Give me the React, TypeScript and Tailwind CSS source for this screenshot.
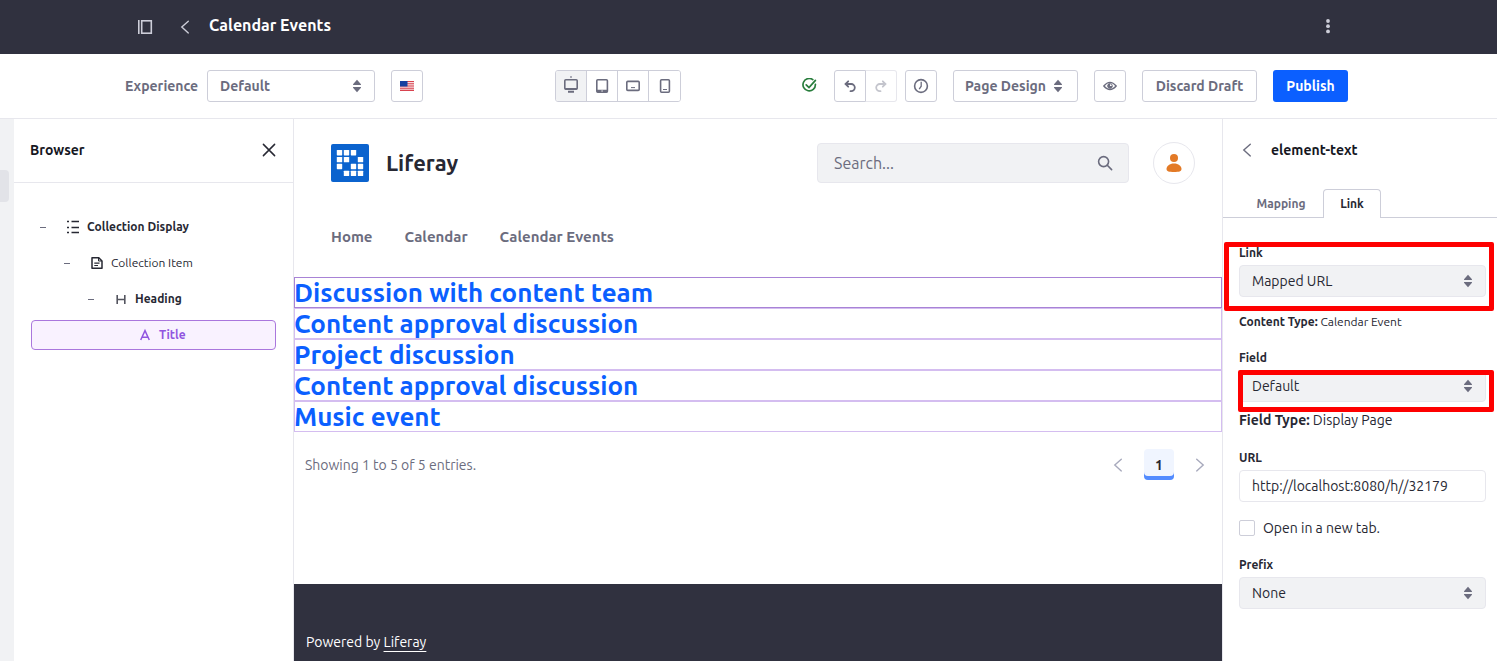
import { useState } from 'react'
import type { ReactNode } from 'react'
import clsx from 'clsx'

const events = [
  'Discussion with content team',
  'Content approval discussion',
  'Project discussion',
  'Content approval discussion',
  'Music event',
]

const CaretDouble = ({ className }: { className?: string }) => (
  <svg viewBox="0 0 16 16" className={clsx('w-4 h-4 fill-[#6b6c7e]', className)}>
    <path d="M8 1.8 12 6.3q.3.7-.5.7h-7q-.8 0-.5-.7z" />
    <path d="M8 14.2 12 9.7q.3-.7-.5-.7h-7q-.8 0-.5.7z" />
  </svg>
)

const Chevron = ({ right, className }: { right?: boolean; className?: string }) => (
  <svg viewBox="0 0 16 16" className={clsx('w-4 h-4', className)} fill="none" stroke="currentColor" strokeWidth="1.4" strokeLinecap="round">
    <path d={right ? 'M4.7 2.3 11.2 8l-6.5 5.9' : 'M11.3 2.3 4.8 8l6.5 5.9'} />
  </svg>
)

const Flag = () => (
  <svg viewBox="0 0 14 10" className="w-[14px] h-[10px]">
    <rect width="14" height="10" fill="#f7dcdf" />
    <path d="M0 .5h14M0 2.7h14M0 5h14M0 7.2h14M0 9.4h14" stroke="#d8434f" strokeWidth="1.1" />
    <rect width="7.5" height="5.5" fill="#1540a0" />
  </svg>
)

const Logo = () => {
  const rows = ['1110', '1101', '1011', '0111']
  return (
    <svg viewBox="0 0 38 38" className="w-[38px] h-[38px]">
      <rect width="38" height="38" rx="2" fill="#0b63ce" />
      {rows.map((row, y) =>
        row.split('').map((on, x) =>
          on === '1' ? (
            <rect key={`${x}-${y}`} x={5.8 + x * 7} y={6 + y * 6.9} width="5.4" height="5.4" rx=".6" fill="#fff" />
          ) : null
        )
      )}
    </svg>
  )
}

const devices: { name: string; icon: ReactNode }[] = [
  {
    name: 'Desktop',
    icon: (
      <>
        <path d="M8-1.8v1.6" strokeWidth="1.4" />
        <rect x="1.8" y="1.8" width="12.4" height="9.4" rx="1" />
        <path d="M2 10.8h12" />
        <path d="M5 13.7h6" strokeWidth="2" />
      </>
    ),
  },
  {
    name: 'Tablet',
    icon: (
      <>
        <rect x="2.8" y="1.8" width="10.6" height="12.4" rx="1" />
        <path d="M3 13h10.4" strokeWidth="2.6" />
        <path d="M7.4 13h1.4" stroke="#fff" strokeWidth="1" />
      </>
    ),
  },
  {
    name: 'Landscape phone',
    icon: (
      <>
        <rect x="1.8" y="3.4" width="12.4" height="9" rx="1" />
        <path d="M6 9.6h4" strokeWidth="1" />
      </>
    ),
  },
  {
    name: 'Portrait phone',
    icon: (
      <>
        <rect x="3.6" y="1.8" width="8.8" height="12.4" rx="1" />
        <path d="M6 11.5h4" strokeWidth="1" />
      </>
    ),
  },
]

const iconButton =
  'w-8 h-8 flex items-center justify-center bg-white border border-[#cdced9] rounded-[3px] text-[#6b6c7e] cursor-pointer'

const SelectBox = ({ id, options }: { id: string; options: string[] }) => (
  <div className="grid items-center">
    <select
      id={id}
      className="col-start-1 row-start-1 w-full h-8 px-3 appearance-none rounded bg-[#f1f2f4] border border-[#e7e7ed] text-sm text-[#272833]"
    >
      {options.map((option) => (
        <option key={option}>{option}</option>
      ))}
    </select>
    <CaretDouble className="col-start-1 row-start-1 justify-self-end mr-[10px] pointer-events-none" />
  </div>
)

const labelClass = 'block w-fit text-xs leading-[18px] font-semibold mb-[3px]'

const TopBar = () => (
  <header className="bg-[#30313f] text-[#cdced9]">
    <div className="max-w-[1247px] h-[54px] mx-auto pl-3 pr-9 flex items-center">
      <button aria-label="Toggle product menu" className="cursor-pointer">
        <svg viewBox="0 0 16 16" className="w-4 h-4" fill="none" stroke="currentColor" strokeWidth="1.6">
          <path d="M1.8 1v14" />
          <rect x="4.7" y="1.8" width="9.6" height="12.4" />
        </svg>
      </button>
      <a href="#back" aria-label="Back" className="ml-6">
        <Chevron />
      </a>
      <h1 className="ml-4 mb-1 text-base font-semibold text-white">Calendar Events</h1>
      <button aria-label="Options" className="ml-auto cursor-pointer">
        <svg viewBox="0 0 16 16" className="w-4 h-4" fill="currentColor">
          <circle cx="8" cy="2" r="1.9" />
          <circle cx="8" cy="7.2" r="1.9" />
          <circle cx="8" cy="12.4" r="1.9" />
        </svg>
      </button>
    </div>
  </header>
)

const Toolbar = () => {
  const [device, setDevice] = useState('Desktop')

  return (
    <div className="border-b border-[#e7e7ed]">
      <div className="max-w-[1247px] h-16 mx-auto pr-6 flex items-center text-sm font-semibold text-[#6b6c7e]">
        <label htmlFor="experience" className="w-[82px]">
          Experience
        </label>
        <div className="grid items-center w-[168px]">
          <select
            id="experience"
            className="col-start-1 row-start-1 w-full h-8 px-3 appearance-none rounded-[3px] border border-[#cdced9] font-semibold"
          >
            <option>Default</option>
          </select>
          <CaretDouble className="col-start-1 row-start-1 justify-self-end mr-[10px] pointer-events-none" />
        </div>
        <button aria-label="Language" className={clsx(iconButton, 'ml-4')}>
          <Flag />
        </button>

        <div className="ml-[132px] flex border border-[#cdced9] rounded-[3px] divide-x divide-[#cdced9] overflow-hidden">
          {devices.map(({ name, icon }) => (
            <button
              key={name}
              aria-label={name}
              onClick={() => setDevice(name)}
              className={clsx(
                'w-[31px] h-[30px] flex items-center justify-center cursor-pointer',
                device === name ? 'bg-[#f1f2f4]' : 'bg-white'
              )}
            >
              <svg viewBox="0 0 16 16" className="w-4 h-4 overflow-visible" fill="none" stroke="currentColor" strokeWidth="1.6">
                {icon}
              </svg>
            </button>
          ))}
        </div>

        <div className="ml-auto flex items-center gap-4">
          <svg viewBox="0 0 16 16" className="w-4 h-4 text-[#287d3c]" fill="none" stroke="currentColor" strokeWidth="1.7">
            <path d="M10.8 1.6A6.2 6.2 0 1 0 13.400 6.400" strokeLinecap="round" />
            <path d="m4.2 6.800 2.800 2.800 6.400-7.200" strokeLinecap="round" />
          </svg>
          <div className="flex">
            <button aria-label="Undo" className={clsx(iconButton, 'rounded-r-none')}>
              <svg viewBox="0 0 16 16" className="w-4 h-4" fill="none" stroke="currentColor" strokeWidth="1.8" strokeLinecap="round">
                <path d="M6.2 3.3 3.5 6l2.7 2.7M4 6h5.2a3.6 3.6 0 1 1 0 7.2h-.7" />
              </svg>
            </button>
            <button aria-label="Redo" disabled className="w-[31px] h-8 flex items-center justify-center border border-l-0 border-[#e7e7ed] rounded-r-[3px] text-[#c4c5cd]">
              <svg viewBox="0 0 16 16" className="w-4 h-4" fill="none" stroke="currentColor" strokeWidth="1.8" strokeLinecap="round">
                <path d="M9.8 3.3 12.5 6 9.8 8.7M12 6H6.8a3.6 3.6 0 1 0 0 7.2h.7" />
              </svg>
            </button>
            <button aria-label="History" className={clsx(iconButton, 'ml-2')}>
              <svg viewBox="0 0 16 16" className="w-4 h-4" fill="none" stroke="currentColor" strokeWidth="1.6">
                <circle cx="8" cy="8" r="6.4" />
                <path d="M8.2 3.8v4.4l-2 3" strokeWidth="1.3" />
              </svg>
            </button>
          </div>
          <button className="w-[125px] h-8 flex items-center justify-center gap-1 border border-[#cdced9] rounded-[3px] cursor-pointer">
            Page Design
            <CaretDouble />
          </button>
          <button aria-label="Preview" className={iconButton}>
            <svg viewBox="0 0 16 16" className="w-4 h-4" fill="none" stroke="currentColor" strokeWidth="1.3">
              <path d="M1.8 8q6.200-7.200 12.400 0-6.200 7.200-12.400 0z" />
              <path d="M8 5.600a2.400 2.400 0 1 0 2.400 2.400H8z" fill="currentColor" stroke="none" />
              <circle cx="8" cy="8" r="2.300" strokeWidth="1" />
            </svg>
          </button>
          <button className="w-[115px] h-8 border border-[#cdced9] rounded-[3px] cursor-pointer">Discard Draft</button>
          <button className="w-[75px] h-8 rounded-[3px] bg-[#0b5fff] text-white cursor-pointer">Publish</button>
        </div>
      </div>
    </div>
  )
}

const Dash = () => <span className="w-[6px] h-px bg-[#6b6c7e] mr-5" />

const BrowserPanel = () => (
  <aside className="w-[280px] shrink-0 border-r border-[#e7e7ed]">
    <div className="h-16 px-4 pb-[2px] flex items-center justify-between border-b border-[#e7e7ed]">
      <h2 className="text-sm font-semibold text-[#16171f]">Browser</h2>
      <button aria-label="Close" className="cursor-pointer">
        <svg viewBox="0 0 16 16" className="w-4 h-4" fill="none" stroke="#272833" strokeWidth="1.5" strokeLinecap="round">
          <path d="m2.4 2.4 11.2 11.2M13.6 2.4 2.4 13.6" />
        </svg>
      </button>
    </div>
    <ul className="mt-[29px] px-[17px] flex flex-col gap-[6px] text-xs font-semibold">
      <li className="h-[30px] pl-[9px] flex items-center">
        <Dash />
        <svg viewBox="0 0 14 14" className="w-[14px] h-[14px] mr-[7px]" fill="none" stroke="currentColor" strokeWidth="1.3">
          <path d="M1 1.5h2M5.5 1.5H13M1 7.5h2M5.5 7.5H13M1 12.5h2M5.5 12.5H13" />
        </svg>
        Collection Display
      </li>
      <li className="h-[30px] pl-[33px] flex items-center font-normal">
        <Dash />
        <svg viewBox="0 0 14 14" className="w-[14px] h-[14px] mr-[7px]" fill="none" stroke="currentColor" strokeWidth="1.5">
          <path d="M2 1.8h6.8L12 5v7.2H2z" strokeLinejoin="round" />
          <path d="M8.5 1.8V5H12" strokeWidth="1" />
          <path d="M4.3 7.2h5.2M4.3 9.5h3.7" strokeWidth="1.2" />
        </svg>
        Collection Item
      </li>
      <li className="h-[30px] pl-[57px] flex items-center">
        <Dash />
        <svg viewBox="0 0 14 14" className="w-[14px] h-[14px] mr-[7px]" fill="none" stroke="#54555f" strokeWidth="1.6">
          <path d="M3.2 3v9M10.8 3v9M3.2 7.5h7.6" />
        </svg>
        Heading
      </li>
      <li className="h-[30px] pl-[106px] flex items-center border border-[#aa77dd] rounded-sm bg-[#f9f2ff] text-[#9155e0]">
        <svg viewBox="0 0 14 14" className="w-[14px] h-[14px] mr-[7px]" fill="none" stroke="currentColor" strokeWidth="1.5">
          <path d="M2.7 12 7 2.6 11.3 12M4.3 9.2h5.4" />
        </svg>
        Title
      </li>
    </ul>
  </aside>
)

const PageCanvas = () => (
  <main className="flex-1 min-w-0 flex flex-col">
    <div className="pt-[23px] pl-[37px] pr-[27px] flex items-center">
      <Logo />
      <span className="ml-[17px] text-[22px] leading-7 font-semibold">Liferay</span>
      <div className="ml-auto w-[312px] h-10 pl-4 pr-[15px] flex items-center rounded border border-[#e7e7ed] bg-[#f1f2f4]">
        <input
          type="text"
          aria-label="Search"
          placeholder="Search..."
          className="flex-1 min-w-0 bg-transparent text-base placeholder:text-[#6b6c7e] outline-none"
        />
        <button aria-label="Submit search" className="cursor-pointer">
          <svg viewBox="0 0 16 16" className="w-4 h-4" fill="none" stroke="#6b6c7e" strokeWidth="1.6" strokeLinecap="round">
            <circle cx="6.6" cy="6.6" r="5" />
            <path d="m10.3 10.3 4.300 4.300" />
          </svg>
        </button>
      </div>
      <button aria-label="User profile" className="ml-6 w-[42px] h-[42px] flex items-center justify-center rounded-full border border-[#e7e7ed] cursor-pointer">
        <svg viewBox="0 0 18 20" className="w-[18px] h-5" fill="#e37a26">
          <circle cx="9" cy="5" r="4" />
          <path d="M9 10.5c4.500 0 7.500 2.500 7.500 5.500 0 2.400-2.500 3-7.500 3s-7.500-.600-7.500-3c0-3 3-5.500 7.500-5.500z" />
        </svg>
      </button>
    </div>

    <nav className="mt-[43px] pl-[37px] flex gap-8 text-[15px] leading-5 font-semibold text-[#6b6c7e]">
      <a href="#home">Home</a>
      <a href="#calendar">Calendar</a>
      <a href="#calendar-events">Calendar Events</a>
    </nav>

    <section className="mt-[30px]">
      {events.map((title, i) => (
        <h3
          key={i}
          className={clsx(
            'h-[31px] ring-1 ring-inset text-[26px] leading-[31px] font-bold',
            i === 0 ? 'ring-[#a883d6]' : 'ring-[#d4bdf0]'
          )}
        >
          <a href="#event" className="text-[#0b5fff]">
            {title}
          </a>
        </h3>
      ))}
    </section>

    <div className="mt-[17px] pl-[11px] pr-[14px] flex items-center justify-between text-sm text-[#6b6c7e]">
      <p>Showing 1 to 5 of 5 entries.</p>
      <div className="flex items-center gap-[18px]">
        <button aria-label="Previous page" disabled className="text-[#a7a9bc]">
          <Chevron />
        </button>
        <button className="w-[30px] h-[31px] rounded bg-[#f0f5ff] shadow-[inset_0_-4px_0_#528bff] font-semibold text-[#272833]">1</button>
        <button aria-label="Next page" disabled className="text-[#a7a9bc]">
          <Chevron right />
        </button>
      </div>
    </div>

    <footer className="mt-[104px] flex-1 pt-12 px-3 bg-[#30313f] text-sm leading-5 text-white">
      Powered by{' '}
      <a href="#liferay" className="underline underline-offset-4">
        Liferay
      </a>
    </footer>
  </main>
)

const LinkPanel = () => (
  <aside className="w-[275px] shrink-0 border-l border-[#e7e7ed]">
    <div className="h-[62px] pl-4 flex items-center">
      <button aria-label="Back" className="text-[#6b6c7e] cursor-pointer">
        <Chevron />
      </button>
      <h2 className="ml-4 text-sm font-semibold text-[#16171f]">element-text</h2>
    </div>
    <div role="tablist" className="mt-2 h-[29px] pl-4 flex text-xs font-semibold shadow-[inset_0_-1px_0_#cdced9]">
      <button role="tab" aria-selected="false" className="w-[84px] text-[#6b6c7e] cursor-pointer">
        Mapping
      </button>
      <button role="tab" aria-selected="true" className="w-[58px] bg-white border border-b-0 border-[#cdced9] rounded-t cursor-pointer">
        Link
      </button>
    </div>

    <form className="mt-[26px] pl-4 pr-[11px]">
      <div className="relative">
        <label htmlFor="link" className={labelClass}>
          Link
        </label>
        <SelectBox id="link" options={['Mapped URL', 'URL', 'Page']} />
        <div className="absolute -top-[2px] -bottom-[14px] -left-[15px] -right-2 border-[5px] border-[#fe0000] rounded-xs pointer-events-none" />
      </div>
      <p className="mt-4 text-xs leading-[18px]">
        <span className="font-semibold">Content Type:</span> Calendar Event
      </p>

      <div className="mt-[18px]">
        <label htmlFor="field" className={labelClass}>
          Field
        </label>
        <div className="relative">
          <SelectBox id="field" options={['Default']} />
          <div className="absolute top-0 -bottom-[10px] -left-px -right-2 border-[5px] border-[#fe0000] rounded-xs pointer-events-none" />
        </div>
      </div>
      <p className="mt-2 text-sm leading-5">
        <span className="font-semibold">Field Type:</span> Display Page
      </p>

      <div className="mt-[19px]">
        <label htmlFor="url" className={labelClass}>
          URL
        </label>
        <input
          id="url"
          type="text"
          defaultValue="http://localhost:8080/h//32179"
          className="w-full h-8 px-3 rounded bg-white border border-[#e7e7ed] text-sm"
        />
      </div>
      <label className="mt-4 flex items-center gap-2 text-sm leading-5">
        <input type="checkbox" className="w-4 h-4 appearance-none border border-[#cdced9] rounded-xs bg-white checked:bg-[#0b5fff]" />
        Open in a new tab.
      </label>

      <div className="mt-[18px]">
        <label htmlFor="prefix" className={labelClass}>
          Prefix
        </label>
        <SelectBox id="prefix" options={['None']} />
      </div>
    </form>
  </aside>
)

export default function App() {
  return (
    <div className="min-h-screen flex flex-col bg-white text-[#272833] font-['Ubuntu','Noto_Sans',sans-serif]">
      <TopBar />
      <Toolbar />
      <div className="flex-1 flex">
        <div className="w-[14px] shrink-0 pt-[51px] bg-[#f1f2f4]">
          <div className="w-[9px] h-8 rounded-r bg-[#e2e3e8]" />
        </div>
        <BrowserPanel />
        <PageCanvas />
        <LinkPanel />
      </div>
    </div>
  )
}
